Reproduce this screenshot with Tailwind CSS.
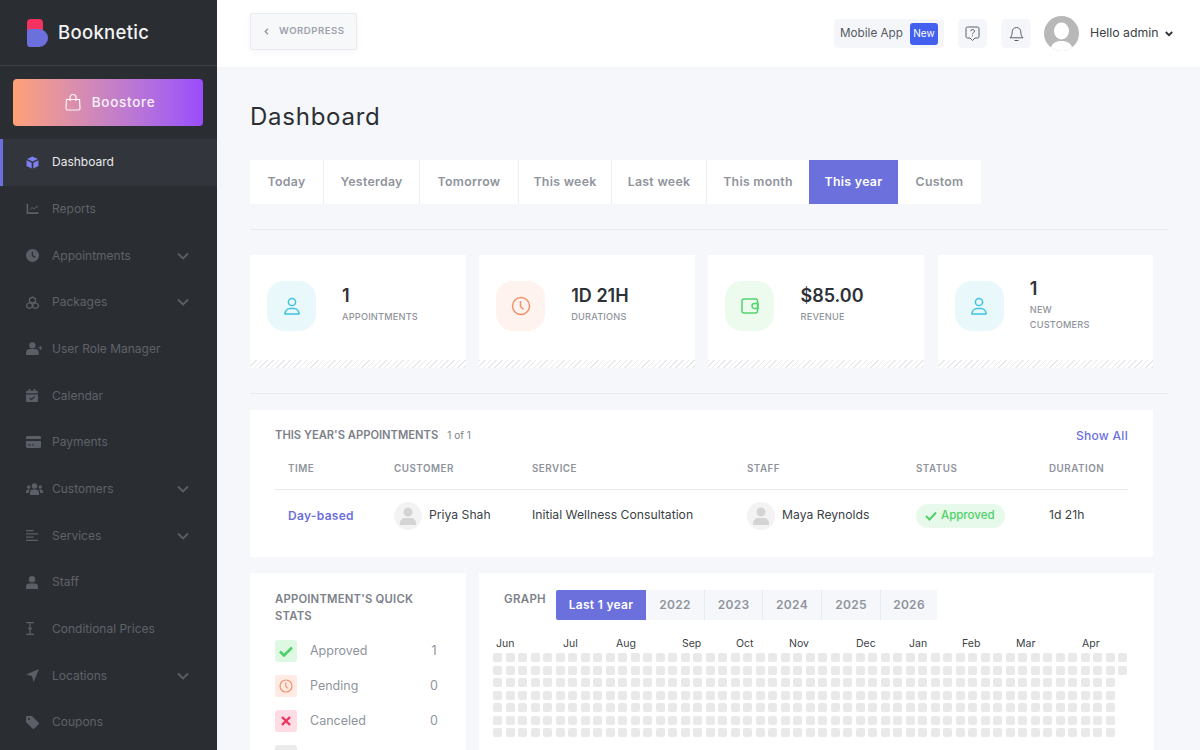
<!DOCTYPE html>
<html lang="en">
<head>
<meta charset="utf-8">
<title>Booknetic</title>
<script src="https://cdn.jsdelivr.net/npm/@tailwindcss/browser@4"></script>
</head>
<body class="[font-family:Inter,sans-serif] bg-[#f5f7fa]">
<div class="flex w-[1200px] h-[750px] overflow-hidden">
  <!-- Sidebar -->
  <aside class="w-[217px] shrink-0 bg-[#2a2d32] flex flex-col">
    <div class="h-[66px] shrink-0 border-b border-[#3d4046] flex items-center pl-[27px] gap-[9px]">
      <svg width="22" height="28" viewBox="0 0 22 28" class="mt-[1px]"><rect x="0" y="0" width="16" height="18" rx="4" fill="#f5325f"/><path d="M0 13a3 3 0 0 1 3-3h9a9 9 0 0 1 0 18H3a3 3 0 0 1-3-3z" fill="#6c70dc"/></svg>
      <span class="text-[#f2f3f4] text-[18.500px] tracking-[0.3px] font-medium">Booknetic</span>
    </div>
    <div class="pl-[13px] pr-[14px] pt-[13px] pb-[13px]">
      <div class="h-[47px] rounded-[4px] bg-linear-to-r from-[#ffa176] to-[#9a4bfc] flex items-center justify-center gap-[11px] pl-[4px] text-white/90">
        <svg width="16" height="17" viewBox="0 0 16 17" fill="none" stroke="currentColor" stroke-width="1.2"><path d="M1.5 5.5h13l.5 9a1.5 1.5 0 0 1-1.5 1.500h-11A1.500 1.500 0 0 1 1 14.500zM5 7V3.500a3 3 0 0 1 6 0V7"/></svg>
        <span class="text-[13.500px] font-medium tracking-[0.7px]">Boostore</span>
      </div>
    </div>
    <nav class="flex flex-col text-[#5f6369] text-[12px]">
      <a class="h-[46.67px] flex items-center pl-[23px] pr-[28px] gap-[13px] bg-[#32353b] text-[#e8eaec] border-l-[3px] border-[#6c70dc]">
        <svg class="w-[13px] h-[13px]" viewBox="0 0 24 24" fill="#7c80f0"><path d="M12 1 2 5.500 12 10l10-4.500zM1 8v10.500l9.500 4.500V12.500zM23 8l-9.500 4.500V23l9.500-4.500z"/></svg>
        <span>Dashboard</span>
      </a>
      <a class="h-[46.67px] flex items-center pl-[26px] pr-[28px] gap-[13px]">
        <svg class="w-[13px] h-[13px]" viewBox="0 0 24 24" fill="#5b5f67"><path d="M1 3h3v16h19v3H1z"/><path d="m6 15 5-6 4 3 4-5 3 2v2l-3-2-4 5-4-3-4 5z"/></svg>
        <span>Reports</span>
      </a>
      <a class="h-[46.67px] flex items-center pl-[26px] pr-[28px] gap-[13px]">
        <svg class="w-[13px] h-[13px]" viewBox="0 0 24 24" fill="#5b5f67"><path fill-rule="evenodd" d="M12 0a12 12 0 1 1 0 24 12 12 0 0 1 0-24zm-1.500 5v8l6 3.500 1.200-2-4.700-2.800V5z"/></svg>
        <span class="flex-1">Appointments</span>
        <svg class="w-[12px] h-[8px]" viewBox="0 0 12 8" fill="none" stroke="#5b5f67" stroke-width="1.800"><path d="m1 1.500 5 5 5-5"/></svg>
      </a>
      <a class="h-[46.67px] flex items-center pl-[26px] pr-[28px] gap-[13px]">
        <svg class="w-[13px] h-[13px]" viewBox="0 0 24 24" fill="none" stroke="#5b5f67" stroke-width="2.400"><path d="m12 2 5.500 3v5.500L12 13.500l-5.500-3V5zM6.500 12.500l5 2.800v5.200l-5 2.500-5-2.500v-5.200zM17.500 12.500l5 2.800v5.200l-5 2.500-5-2.500v-5.200z"/></svg>
        <span class="flex-1">Packages</span>
        <svg class="w-[12px] h-[8px]" viewBox="0 0 12 8" fill="none" stroke="#5b5f67" stroke-width="1.800"><path d="m1 1.500 5 5 5-5"/></svg>
      </a>
      <a class="h-[46.67px] flex items-center pl-[26px] pr-[28px] gap-[9px]">
        <svg class="w-[17px] h-[13px]" viewBox="0 0 32 24" fill="#5b5f67"><circle cx="12" cy="6" r="6"/><path d="M0 24v-4a7 7 0 0 1 7-7h10a7 7 0 0 1 7 7v4zM26 7h2v3h3v2h-3v3h-2v-3h-3v-2h3z"/></svg>
        <span>User Role Manager</span>
      </a>
      <a class="h-[46.67px] flex items-center pl-[26px] pr-[28px] gap-[14px]">
        <svg class="w-[12px] h-[13px]" viewBox="0 0 22 24" fill="#5b5f67"><path fill-rule="evenodd" d="M5 0h3v3h6V0h3v3h3a2 2 0 0 1 2 2v3H0V5a2 2 0 0 1 2-2h3zM0 10h22v12a2 2 0 0 1-2 2H2a2 2 0 0 1-2-2zm15.500 3L10 18l-3-2.500-1.500 1.500 4.500 4 7-6.500z"/></svg>
        <span>Calendar</span>
      </a>
      <a class="h-[46.67px] flex items-center pl-[26px] pr-[28px] gap-[11px]">
        <svg class="w-[15px] h-[12px]" viewBox="0 0 30 24" fill="#5b5f67"><path fill-rule="evenodd" d="M3 0h24a3 3 0 0 1 3 3v3H0V3a3 3 0 0 1 3-3zM0 10h30v11a3 3 0 0 1-3 3H3a3 3 0 0 1-3-3zm4 7v2h6v-2zm8 0v2h4v-2z"/></svg>
        <span>Payments</span>
      </a>
      <a class="h-[46.67px] flex items-center pl-[26px] pr-[28px] gap-[9px]">
        <svg class="w-[17px] h-[12px]" viewBox="0 0 34 24" fill="#5b5f67"><circle cx="17" cy="6" r="5.500"/><circle cx="5.500" cy="8" r="3.500"/><circle cx="28.500" cy="8" r="3.500"/><path d="M8 24v-5a6 6 0 0 1 6-6h6a6 6 0 0 1 6 6v5zM0 20v-3a4 4 0 0 1 4-4h4a8 8 0 0 0-2.500 7zM34 20v-3a4 4 0 0 0-4-4h-4a8 8 0 0 1 2.500 7z"/></svg>
        <span class="flex-1">Customers</span>
        <svg class="w-[12px] h-[8px]" viewBox="0 0 12 8" fill="none" stroke="#5b5f67" stroke-width="1.800"><path d="m1 1.500 5 5 5-5"/></svg>
      </a>
      <a class="h-[46.67px] flex items-center pl-[26px] pr-[28px] gap-[14px]">
        <svg class="w-[12px] h-[11px]" viewBox="0 0 24 22" fill="#5b5f67"><path d="M0 0h15v2.500H0zM0 6.500h24V9H0zM0 13h15v2.500H0zM0 19.500h24V22H0z"/></svg>
        <span class="flex-1">Services</span>
        <svg class="w-[12px] h-[8px]" viewBox="0 0 12 8" fill="none" stroke="#5b5f67" stroke-width="1.800"><path d="m1 1.500 5 5 5-5"/></svg>
      </a>
      <a class="h-[46.67px] flex items-center pl-[26px] pr-[28px] gap-[14px]">
        <svg class="w-[12px] h-[13px]" viewBox="0 0 22 24" fill="#5b5f67"><circle cx="11" cy="6" r="6"/><path d="M0 24v-4a6 6 0 0 1 6-6h10a6 6 0 0 1 6 6v4z"/></svg>
        <span>Staff</span>
      </a>
      <a class="h-[46.67px] flex items-center pl-[26px] pr-[28px] gap-[18px]">
        <svg class="w-[8px] h-[13px]" viewBox="0 0 14 24" fill="none" stroke="#5b5f67" stroke-width="2.400"><path d="M0 1.200h14M0 22.800h14M7 1.200v21.600M3.500 12h7"/></svg>
        <span>Conditional Prices</span>
      </a>
      <a class="h-[46.67px] flex items-center pl-[26px] pr-[28px] gap-[13px]">
        <svg class="w-[13px] h-[13px]" viewBox="0 0 24 24" fill="#5b5f67"><path d="M24 0 14 24l-3-11L0 10z"/></svg>
        <span class="flex-1">Locations</span>
        <svg class="w-[12px] h-[8px]" viewBox="0 0 12 8" fill="none" stroke="#5b5f67" stroke-width="1.800"><path d="m1 1.500 5 5 5-5"/></svg>
      </a>
      <a class="h-[46.67px] flex items-center pl-[26px] pr-[28px] gap-[13px]">
        <svg class="w-[13px] h-[13px]" viewBox="0 0 24 24" fill="#5b5f67"><path fill-rule="evenodd" d="M0 2a2 2 0 0 1 2-2h9l12 12a2.500 2.500 0 0 1 0 3.500L15.500 23a2.500 2.500 0 0 1-3.500 0L0 11zm5.500 1.500a2 2 0 1 0 0 4 2 2 0 0 0 0-4z"/></svg>
        <span>Coupons</span>
      </a>
    </nav>
  </aside>

  <!-- Right side -->
  <div class="flex-1 flex flex-col min-w-0">
    <header class="h-[67px] shrink-0 bg-white flex items-center pl-[33px] pr-[27px]">
      <div class="w-[107px] h-[37px] -mt-[4px] rounded-[2px] border border-[#e8ebef] bg-[#f7f8fa] shadow-[0_2px_8px_rgba(0,0,0,0.04)] flex items-center pl-[13px] gap-[10px] text-[#9da2ab]">
        <svg width="5" height="7" viewBox="0 0 5 7" fill="none" stroke="#8f949d" stroke-width="1.300"><path d="M4 .8 1.200 3.500 4 6.200"/></svg>
        <span class="text-[9.600px] font-semibold tracking-[0.5px]">WORDPRESS</span>
      </div>
      <div class="ml-auto w-[110px] h-[29px] rounded-[4px] bg-[#f4f6fa] flex items-center pl-[6px]">
        <span class="w-[70px] text-[11.700px] text-[#555a63]">Mobile App</span>
        <span class="w-[28px] h-[22px] rounded-[3px] bg-[#4361ee] text-white text-[10px] flex items-center justify-center">New</span>
      </div>
      <div class="ml-[14px] w-[29px] h-[29px] rounded-[5px] bg-[#f4f6fa] flex items-center justify-center">
        <svg width="15" height="16" viewBox="0 0 15 16" fill="none" stroke="#5b6068" stroke-width="1"><path d="M2.500 1h10A1.500 1.500 0 0 1 14 2.500v8a1.500 1.500 0 0 1-1.500 1.500H10l-2.500 2.500L5 12H2.500A1.500 1.500 0 0 1 1 10.500v-8A1.500 1.500 0 0 1 2.500 1z"/><path d="M5.800 5.200a1.800 1.800 0 1 1 2.500 1.700c-.6.300-.8.600-.8 1.300M7.500 9.300v1"/></svg>
      </div>
      <div class="ml-[14px] w-[30px] h-[29px] rounded-[5px] bg-[#f4f6fa] flex items-center justify-center">
        <svg width="15" height="16" viewBox="0 0 15 16" fill="none" stroke="#5b6068" stroke-width="1"><path d="M7.500 1.500a4.300 4.300 0 0 0-4.300 4.300c0 3.600-1.200 5-2.200 6h13c-1-1-2.200-2.400-2.200-6a4.300 4.300 0 0 0-4.300-4.300zM5.500 14.500h4"/></svg>
      </div>
      <div class="ml-[13px] w-[35px] h-[35px] rounded-full bg-[#b8b8b8] overflow-hidden flex items-center justify-center">
        <svg width="35" height="35" viewBox="0 0 35 35" fill="#fff"><ellipse cx="17.500" cy="15" rx="7.500" ry="8.500"/><path d="M6 35c1-8 6-10 11.500-10S28 27 29 35z"/></svg>
      </div>
      <span class="ml-[11px] w-[68px] whitespace-nowrap text-[12.300px] text-[#3b3f46]">Hello admin</span>
      <svg class="ml-[7px]" width="8" height="6" viewBox="0 0 8 6" fill="none" stroke="#2f3238" stroke-width="1.800"><path d="m.8 1 3.200 3.200L7.200 1"/></svg>
    </header>

    <main class="flex-1 flex flex-col pl-[33px] min-h-0">
      <div class="h-[93px] shrink-0 flex items-center pt-[7px]">
        <h1 class="text-[24px] text-[#2c2f35] tracking-[0.75px]">Dashboard</h1>
      </div>

      <div class="flex h-[44px] shrink-0 text-[12.300px] font-semibold text-[#8f949c] tracking-[0.3px]">
        <div class="w-[74px] bg-white border-r border-[#eceef2] flex items-center justify-center">Today</div>
        <div class="w-[96px] bg-white border-r border-[#eceef2] flex items-center justify-center">Yesterday</div>
        <div class="w-[99px] bg-white border-r border-[#eceef2] flex items-center justify-center">Tomorrow</div>
        <div class="w-[93px] bg-white border-r border-[#eceef2] flex items-center justify-center">This week</div>
        <div class="w-[95px] bg-white border-r border-[#eceef2] flex items-center justify-center">Last week</div>
        <div class="w-[102px] bg-white flex items-center justify-center">This month</div>
        <div class="w-[89px] bg-[#6c70dc] text-white flex items-center justify-center">This year</div>
        <div class="w-[83px] bg-white flex items-center justify-center">Custom</div>
      </div>

      <div class="mt-[25px] w-[918px] shrink-0 border-t border-[#e8ebef]"></div>

      <div class="mt-[25px] w-[903.400px] shrink-0 grid grid-cols-4 gap-[13.600px]">
        <div class="h-[113px] bg-white flex flex-col">
          <div class="flex-1 flex items-center pl-[17px] gap-[26px] pb-[3px]">
            <div class="w-[49px] h-[50px] rounded-[17px] bg-[#e9f8fb] flex items-center justify-center">
              <svg width="18" height="20" viewBox="0 0 18 20" fill="none" stroke="#3fc3df" stroke-width="1.500"><circle cx="9" cy="6" r="3.600"/><path d="M2 18c0-3.500 2.500-5.500 5-5.500h4c2.500 0 5 2 5 5.500z"/></svg>
            </div>
            <div class="flex flex-col pb-[4px]">
              <span class="text-[18px] leading-[24px] font-semibold text-[#2e3136]">1</span>
              <span class="mt-[1px] text-[9.200px] leading-[15px] font-medium text-[#8f949c] tracking-[0.2px]">APPOINTMENTS</span>
            </div>
          </div>
          <div class="h-[8px] bg-[repeating-linear-gradient(135deg,#e6e8ec_0,#e6e8ec_1px,transparent_1px,transparent_4px)]"></div>
        </div>
        <div class="h-[113px] bg-white flex flex-col">
          <div class="flex-1 flex items-center pl-[17px] gap-[26px] pb-[3px]">
            <div class="w-[49px] h-[50px] rounded-[17px] bg-[#fff3ef] flex items-center justify-center">
              <svg width="20" height="20" viewBox="0 0 20 20" fill="none" stroke="#f0936a" stroke-width="1.500"><circle cx="10" cy="10" r="8.500"/><path d="M9.500 5v5.500l3 3"/></svg>
            </div>
            <div class="flex flex-col pb-[4px]">
              <span class="text-[18px] leading-[24px] font-semibold text-[#2e3136]">1D 21H</span>
              <span class="mt-[1px] text-[9.200px] leading-[15px] font-medium text-[#8f949c] tracking-[0.2px]">DURATIONS</span>
            </div>
          </div>
          <div class="h-[8px] bg-[repeating-linear-gradient(135deg,#e6e8ec_0,#e6e8ec_1px,transparent_1px,transparent_4px)]"></div>
        </div>
        <div class="h-[113px] bg-white flex flex-col">
          <div class="flex-1 flex items-center pl-[17px] gap-[26px] pb-[3px]">
            <div class="w-[49px] h-[50px] rounded-[17px] bg-[#ecfbee] flex items-center justify-center">
              <svg width="18" height="16" viewBox="0 0 18 16" fill="none" stroke="#52d46d" stroke-width="1.500"><rect x="1" y="1" width="15.500" height="14" rx="2"/><path d="M17 5.500h-3.500a2.500 2.500 0 0 0 0 5H17z"/></svg>
            </div>
            <div class="flex flex-col pb-[4px]">
              <span class="text-[18px] leading-[24px] font-semibold text-[#2e3136]">$85.00</span>
              <span class="mt-[1px] text-[9.200px] leading-[15px] font-medium text-[#8f949c] tracking-[0.2px]">REVENUE</span>
            </div>
          </div>
          <div class="h-[8px] bg-[repeating-linear-gradient(135deg,#e6e8ec_0,#e6e8ec_1px,transparent_1px,transparent_4px)]"></div>
        </div>
        <div class="h-[113px] bg-white flex flex-col">
          <div class="flex-1 flex items-center pl-[17px] gap-[26px] pb-[3px]">
            <div class="w-[49px] h-[50px] rounded-[17px] bg-[#e9f8fb] flex items-center justify-center">
              <svg width="18" height="20" viewBox="0 0 18 20" fill="none" stroke="#3fc3df" stroke-width="1.500"><circle cx="9" cy="6" r="3.600"/><path d="M2 18c0-3.500 2.500-5.500 5-5.500h4c2.500 0 5 2 5 5.500z"/></svg>
            </div>
            <div class="flex flex-col pb-[4px]">
              <span class="text-[18px] leading-[24px] font-semibold text-[#2e3136]">1</span>
              <span class="mt-[1px] text-[9.200px] leading-[15px] font-medium text-[#8f949c] tracking-[0.2px]">NEW<br>CUSTOMERS</span>
            </div>
          </div>
          <div class="h-[8px] bg-[repeating-linear-gradient(135deg,#e6e8ec_0,#e6e8ec_1px,transparent_1px,transparent_4px)]"></div>
        </div>
      </div>

      <div class="mt-[25px] w-[918px] shrink-0 border-t border-[#e8ebef]"></div>

      <section class="mt-[16px] w-[903px] h-[147px] shrink-0 bg-white px-[25px]">
        <div class="h-[41px] pt-[9px] flex items-center">
          <span class="text-[11.200px] font-semibold text-[#7d828a]">THIS YEAR'S APPOINTMENTS</span>
          <span class="ml-[9px] text-[10px] text-[#7d828a]">1 of 1</span>
          <span class="ml-auto mt-[2px] text-[12px] font-medium text-[#6c70dc] tracking-[0.3px]">Show All</span>
        </div>
        <div class="h-[39px] pb-[1px] grid grid-cols-[119px_138px_215px_169px_133px_1fr] items-center border-b border-[#e8ebef] text-[9.800px] font-semibold text-[#8f949c] tracking-[0.5px]">
          <span class="pl-[13px]">TIME</span>
          <span>CUSTOMER</span>
          <span>SERVICE</span>
          <span>STAFF</span>
          <span>STATUS</span>
          <span>DURATION</span>
        </div>
        <div class="h-[51px] grid grid-cols-[119px_138px_215px_169px_133px_1fr] items-center text-[12.200px] text-[#3b3f46]">
          <span class="pl-[13px] text-[12px] font-semibold text-[#6c70dc] tracking-[0.3px]">Day-based</span>
          <div class="flex items-center gap-[7px]">
            <div class="w-[28px] h-[28px] rounded-full bg-[#f3f3f3] flex items-center justify-center overflow-hidden">
              <svg width="16" height="18" viewBox="0 0 16 18" fill="#d4d4d4"><circle cx="8" cy="5" r="4.500"/><path d="M0 18v-2c0-3 3-5 5-5h6c2 0 5 2 5 5v2z"/></svg>
            </div>
            <span>Priya Shah</span>
          </div>
          <span>Initial Wellness Consultation</span>
          <div class="flex items-center gap-[7px]">
            <div class="w-[28px] h-[28px] rounded-full bg-[#f3f3f3] flex items-center justify-center overflow-hidden">
              <svg width="16" height="18" viewBox="0 0 16 18" fill="#d4d4d4"><circle cx="8" cy="5" r="4.500"/><path d="M0 18v-2c0-3 3-5 5-5h6c2 0 5 2 5 5v2z"/></svg>
            </div>
            <span>Maya Reynolds</span>
          </div>
          <div class="w-[89px] h-[24px] rounded-full bg-[#e7f9ea] flex items-center pl-[9px] gap-[4px]">
            <svg width="12" height="10" viewBox="0 0 12 10" fill="none" stroke="#4fd16a" stroke-width="2"><path d="m1 5 3.500 3.500L11 1.500"/></svg>
            <span class="text-[11.500px] font-medium text-[#4fd16a]">Approved</span>
          </div>
          <span>1d 21h</span>
        </div>
      </section>

      <div class="mt-[16px] flex gap-[13px] items-start shrink-0">
        <section class="w-[216px] h-[200px] bg-white pl-[25px] pr-[28px] pt-[18px]">
          <h2 class="text-[11.300px] leading-[17px] font-semibold text-[#7d828a] tracking-[0.2px]">APPOINTMENT'S QUICK<br>STATS</h2>
          <div class="mt-[15px] flex flex-col gap-[13px] text-[12.500px] text-[#8f949c]">
            <div class="flex items-center h-[22px]">
              <div class="w-[22px] h-[22px] rounded-[3px] bg-[#dff8e4] flex items-center justify-center"><svg width="14" height="11" viewBox="0 0 14 11" fill="none" stroke="#4fd16a" stroke-width="2.600"><path d="m1 5.500 4 4L13 1.500"/></svg></div>
              <span class="ml-[13px] flex-1">Approved</span><span class="w-[8px] text-center">1</span>
            </div>
            <div class="flex items-center h-[22px]">
              <div class="w-[22px] h-[22px] rounded-[3px] bg-[#ffeae4] flex items-center justify-center"><svg width="14" height="14" viewBox="0 0 14 14" fill="none" stroke="#f0936a" stroke-width="1.200"><circle cx="7" cy="7" r="6"/><path d="M6.800 3.500v3.800l2 2"/></svg></div>
              <span class="ml-[13px] flex-1">Pending</span><span class="w-[8px] text-center">0</span>
            </div>
            <div class="flex items-center h-[22px]">
              <div class="w-[22px] h-[22px] rounded-[3px] bg-[#ffdbe4] flex items-center justify-center"><svg width="10" height="10" viewBox="0 0 10 10" fill="none" stroke="#f0325f" stroke-width="2.400"><path d="m1 1 8 8M9 1 1 9"/></svg></div>
              <span class="ml-[13px] flex-1">Canceled</span><span class="w-[8px] text-center">0</span>
            </div>
            <div class="w-[22px] h-[22px] rounded-[3px] bg-[#ebebeb]"></div>
          </div>
        </section>
        <section class="w-[674.500px] h-[200px] bg-white pt-[17px]">
          <div class="flex items-center h-[30px]">
            <span class="ml-[25px] w-[52px] text-[11.500px] font-semibold text-[#7d828a] -mt-[10px] tracking-[0.3px]">GRAPH</span>
            <div class="flex h-[30px] text-[12px] font-semibold text-[#8f949c] bg-[#f5f7fb] tracking-[0.3px]">
              <div class="w-[90px] rounded-l-[2px] bg-[#6c70dc] text-white flex items-center justify-center">Last 1 year</div>
              <div class="w-[59px] border-r border-[#e8ebef] flex items-center justify-center">2022</div>
              <div class="w-[58px] border-r border-[#e8ebef] flex items-center justify-center">2023</div>
              <div class="w-[59px] border-r border-[#e8ebef] flex items-center justify-center">2024</div>
              <div class="w-[59px] border-r border-[#e8ebef] flex items-center justify-center">2025</div>
              <div class="w-[56px] flex items-center justify-center">2026</div>
            </div>
          </div>
          <div class="ml-[17px] mt-[15px] h-[18px] flex items-center text-[10.500px] text-[#3b3f46]">
            <span class="w-[67px]">Jun</span><span class="w-[53px]">Jul</span><span class="w-[66px]">Aug</span><span class="w-[54px]">Sep</span><span class="w-[53px]">Oct</span><span class="w-[67px]">Nov</span><span class="w-[53px]">Dec</span><span class="w-[53px]">Jan</span><span class="w-[54px]">Feb</span><span class="w-[66px]">Mar</span><span>Apr</span>
          </div>
          <div id="heat" class="ml-[14px] grid grid-flow-col grid-rows-[repeat(7,9px)] auto-cols-[9px] gap-[3.500px]"></div>
        </section>
      </div>
    </main>
  </div>
</div>
<script>
  var heat = document.getElementById('heat');
  for (var i = 0; i < 352; i++) {
    var cell = document.createElement('div');
    cell.className = 'w-[9px] h-[9px] rounded-[2px] bg-[#e9e9e9]';
    heat.appendChild(cell);
  }
</script>
</body>
</html>
